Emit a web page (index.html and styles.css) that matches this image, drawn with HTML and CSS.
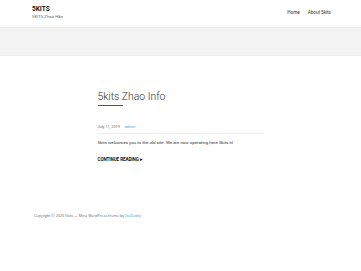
FILE: index.html
```html
<!DOCTYPE html>
<html lang="en">
<head>
    <meta charset="UTF-8">
    <meta name="viewport" content="width=device-width, initial-scale=1.0">
    <title>5KITS</title>
    <link rel="stylesheet" href="styles.css">
</head>
<body>
<header class="site-header">
    <div class="header-inner">
        <div class="branding">
            <div class="site-title">5KITS</div>
            <div class="site-tagline">5KITS Zhao Hãn</div>
        </div>
        <nav class="main-nav">
            <a href="#">Home</a>
            <a href="#">About 5kits</a>
        </nav>
    </div>
</header>
<div class="page-band"></div>
<main class="content">
    <article class="post">
        <h1 class="post-title">5kits Zhao Info</h1>
        <div class="post-meta">
            <span class="post-date">July 11, 2019</span>
            <a class="post-author" href="#">admin</a>
        </div>
        <p class="post-text">5kits welcomes you to the old site. We are now operating here 5kits.nl</p>
        <a class="more-link" href="#">CONTINUE READING <span class="arrow">&#9656;</span></a>
    </article>
</main>
<footer class="site-footer">
    Copyright &copy; 2020 5kits &mdash; Mina WordPress theme by <a href="#">GoDaddy</a>
</footer>
</body>
</html>
```

FILE: styles.css
```css
body {
    font-family: 'Roboto', sans-serif;
    background-color: #FFFFFF;
    color: #222;
    margin: 0;
    padding: 0;
}

a {
    text-decoration: none;
}

.site-header {
    height: 27px;
}

.header-inner {
    display: flex;
    justify-content: space-between;
    align-items: flex-start;
    padding: 5px 30px 0 32px;
}

.site-title {
    font-weight: 700;
    font-size: 6.5px;
    line-height: 8px;
    color: #111;
}

.site-tagline {
    font-size: 4.3px;
    line-height: 7px;
    color: #666;
}

.main-nav {
    display: flex;
    gap: 8px;
    padding-top: 5px;
}

.main-nav a {
    font-size: 4.6px;
    color: #333;
}

.page-band {
    height: 27px;
    background-color: #F3F3F3;
    border-top: 1px solid #EEEEEE;
    border-bottom: 1px solid #EEEEEE;
}

.content {
    width: 166px;
    margin: 0 auto;
    padding-top: 34px;
}

.post-title {
    font-weight: 300;
    font-size: 10.4px;
    line-height: 13px;
    color: #333;
    margin: 0;
    padding-bottom: 4px;
}

.post-title::after {
    content: "";
    display: block;
    width: 25px;
    height: 1px;
    background-color: #555;
    margin-top: 2px;
}

.post-meta {
    margin-top: 14px;
    padding-bottom: 4px;
    border-bottom: 1px solid #EEEEEE;
    font-size: 3.8px;
    line-height: 5px;
    color: #666;
}

.post-author {
    color: #4AA3D6;
    margin-left: 4px;
}

.post-text {
    font-size: 4.4px;
    line-height: 6px;
    color: #333;
    margin: 6px 0 0;
}

.more-link {
    display: inline-block;
    margin-top: 7px;
    font-weight: 700;
    font-size: 4.6px;
    letter-spacing: -0.1px;
    color: #111;
}

.site-footer {
    padding: 48px 34px 0;
    font-family: 'Open Sans', sans-serif;
    font-size: 3.7px;
    color: #666;
}

.site-footer a {
    color: #4AA3D6;
}
```
